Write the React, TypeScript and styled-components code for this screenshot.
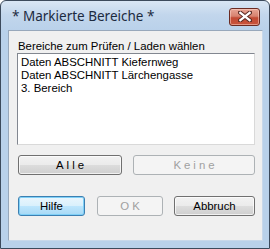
import React from 'react';
import styled, { createGlobalStyle } from 'styled-components';

const GlobalStyle = createGlobalStyle`
  html, body {
    margin: 0;
    padding: 0;
    background: #ffffff;
  }
`;

const Window = styled.div`
  width: 270px;
  height: 249px;
  box-sizing: border-box;
  border: 1px solid #3c4a5c;
  border-radius: 6px 6px 0 0;
  background: linear-gradient(180deg, #d9e6f4 0px, #c2d6ec 14px, #b9d1ea 30px, #b9d1ea 100%);
  display: flex;
  flex-direction: column;
  overflow: hidden;
`;

const TitleBar = styled.div`
  height: 29px;
  display: flex;
  align-items: center;
  justify-content: space-between;
  padding: 0 9px 0 11px;
  box-sizing: border-box;
`;

const Title = styled.span`
  font-family: 'Noto Sans', 'Open Sans', sans-serif;
  font-size: 13.5px;
  color: #1c2a3f;
  margin-top: 1px;
`;

const CloseButton = styled.div`
  width: 31px;
  height: 18px;
  box-sizing: border-box;
  border: 1px solid #6b2b22;
  border-radius: 3px;
  background: linear-gradient(180deg, #e8a595 0%, #d7826f 45%, #c24a34 55%, #c8543c 100%);
  box-shadow: inset 0 0 0 1px rgba(255, 220, 210, 0.5);
  display: flex;
  align-items: center;
  justify-content: center;
  margin-top: 2px;
`;

const Frame = styled.div`
  flex: 1;
  display: flex;
  padding: 0 7px 7px 7px;
`;

const Client = styled.div`
  flex: 1;
  background: #f0f0f0;
  border: 1px solid #98a8bb;
  border-bottom-color: #c8d8ea;
  border-right-color: #c8d8ea;
  padding: 10px 7px 0 8px;
  display: flex;
  flex-direction: column;
  font-family: 'Liberation Sans', Arial, sans-serif;
  font-size: 11.4px;
  color: #000;
`;

const Label = styled.div`
  padding-left: 1px;
  height: 11px;
  line-height: 11px;
`;

const ListBox = styled.div`
  margin-top: 1px;
  height: 92px;
  box-sizing: border-box;
  background: #ffffff;
  border: 1px solid #828790;
  border-right-color: #d9d9d9;
  border-bottom-color: #d9d9d9;
  padding: 2px 2px;
  display: flex;
  flex-direction: column;
`;

const ListItem = styled.div`
  height: 13px;
  line-height: 13px;
  padding-left: 1px;
  white-space: nowrap;
`;

const ButtonRow = styled.div<{ $top: number }>`
  display: flex;
  margin-top: ${p => p.$top}px;
  padding-left: 1px;
`;

const Button = styled.div<{ $w: number; $h: number; $gap?: number; $disabled?: boolean; $focused?: boolean; $spaced?: boolean }>`
  width: ${p => p.$w}px;
  height: ${p => p.$h}px;
  margin-left: ${p => p.$gap ?? 0}px;
  box-sizing: border-box;
  border-radius: 3px;
  display: flex;
  align-items: center;
  justify-content: center;
  letter-spacing: ${p => (p.$spaced ? '3px' : '0')};
  text-indent: ${p => (p.$spaced ? '3px' : '0')};
  color: ${p => (p.$disabled ? '#a0a0a0' : '#000')};
  border: 1px solid ${p => (p.$disabled ? '#adb2b5' : p.$focused ? '#3c7fb1' : '#707070')};
  background: ${p =>
    p.$disabled
      ? '#f4f4f4'
      : p.$focused
      ? 'linear-gradient(180deg, #eaf6fd 0%, #d9f0fc 50%, #bee6fd 50%, #a7d9f5 100%)'
      : 'linear-gradient(180deg, #f2f2f2 0%, #ebebeb 50%, #dddddd 50%, #cfcfcf 100%)'};
  box-shadow: ${p =>
    p.$disabled
      ? 'none'
      : p.$focused
      ? 'inset 0 0 0 1px #7fd0f7'
      : 'inset 0 0 0 1px rgba(255,255,255,0.7)'};
`;

const CloseIcon = () => (
  <svg width="14" height="11" viewBox="0 0 14 11">
    <path d="M2 1.5 L12 9.5 M12 1.5 L2 9.5" stroke="#5a2a24" strokeWidth="4.2" strokeLinecap="square" />
    <path d="M2.4 1.9 L11.6 9.1 M11.6 1.9 L2.4 9.1" stroke="#ffffff" strokeWidth="2.4" strokeLinecap="square" />
  </svg>
);

const items = ['Daten ABSCHNITT Kiefernweg', 'Daten ABSCHNITT Lärchengasse', '3. Bereich'];

const App: React.FC = () => {
  return (
    <>
      <GlobalStyle />
      <Window>
        <TitleBar>
          <Title>* Markierte Bereiche *</Title>
          <CloseButton>
            <CloseIcon />
          </CloseButton>
        </TitleBar>
        <Frame>
          <Client>
            <Label>Bereiche zum Prüfen / Laden wählen</Label>
            <ListBox>
              {items.map((item, index) => (
                <ListItem key={index}>{item}</ListItem>
              ))}
            </ListBox>
            <ButtonRow $top={10}>
              <Button $w={104} $h={20} $spaced>Alle</Button>
              <Button $w={122} $h={20} $gap={11} $spaced $disabled>Keine</Button>
            </ButtonRow>
            <ButtonRow $top={21}>
              <Button $w={67} $h={20} $focused>Hilfe</Button>
              <Button $w={66} $h={20} $gap={12} $disabled $spaced>OK</Button>
              <Button $w={81} $h={20} $gap={11}>Abbruch</Button>
            </ButtonRow>
          </Client>
        </Frame>
      </Window>
    </>
  );
};

export default App;
